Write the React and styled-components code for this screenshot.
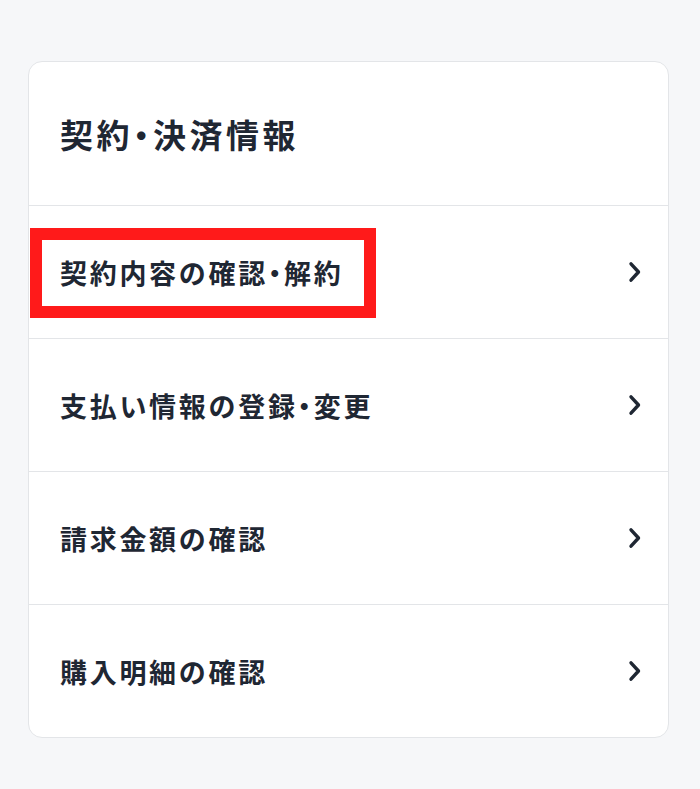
import React from "react";
import styled, { createGlobalStyle } from "styled-components";

const Global = createGlobalStyle`
  html, body { margin: 0; padding: 0; background: #f6f7f9; }
  body { font-family: "Noto Sans CJK JP", "Noto Sans", sans-serif; }
`;

const Page = styled.div`
  padding: 61px 31px 52px 28px;
`;

const Card = styled.section`
  background: #fff;
  border: 1px solid #e3e5e8;
  border-radius: 14px;
  overflow: hidden;
`;

const Header = styled.h2`
  margin: 0;
  height: 143px;
  display: flex;
  align-items: center;
  padding: 0 0 0 31px;
  font-size: 33px;
  font-weight: 700;
  color: #1f2733;
  letter-spacing: 3.5px;
  border-bottom: 1px solid #e3e5e8;
`;

const Row = styled.a`
  position: relative;
  display: flex;
  align-items: center;
  justify-content: space-between;
  height: 132px;
  padding: 0 24px 0 31px;
  color: #1f2733;
  text-decoration: none;
  font-size: 27px;
  font-weight: 700;
  letter-spacing: 2.7px;
  & + & { border-top: 1px solid #e3e5e8; }
`;

// 中黒だけプロポーショナル幅で詰める
const Dot = styled.span`
  font-feature-settings: "palt";
`;

const Highlight = styled.span`
  position: absolute;
  left: 1px;
  top: 22px;
  width: 322px;
  height: 66px;
  border: 12px solid #ff1a1a;
  pointer-events: none;
`;

const Chevron = () => (
  <svg width="18" height="24" viewBox="0 0 18 24" fill="none" stroke="#1f2733" strokeWidth="3.4" strokeLinecap="round" strokeLinejoin="round">
    <path d="M5 3.8l7.5 8.2-7.5 8.2" />
  </svg>
);

const Label = ({ text }) => {
  const parts = text.split("・");
  return (
    <span>
      {parts.map((p, i) => (
        <React.Fragment key={i}>
          {i > 0 && <Dot>・</Dot>}
          {p}
        </React.Fragment>
      ))}
    </span>
  );
};

const items = [
  { label: "契約内容の確認・解約", marked: true },
  { label: "支払い情報の登録・変更" },
  { label: "請求金額の確認" },
  { label: "購入明細の確認" },
];

export default function App() {
  return (
    <Page>
      <Global />
      <Card>
        <Header>
          <Label text="契約・決済情報" />
        </Header>
        {items.map((it) => (
          <Row key={it.label} href="#">
            <Label text={it.label} />
            <Chevron />
            {it.marked && <Highlight />}
          </Row>
        ))}
      </Card>
    </Page>
  );
}
